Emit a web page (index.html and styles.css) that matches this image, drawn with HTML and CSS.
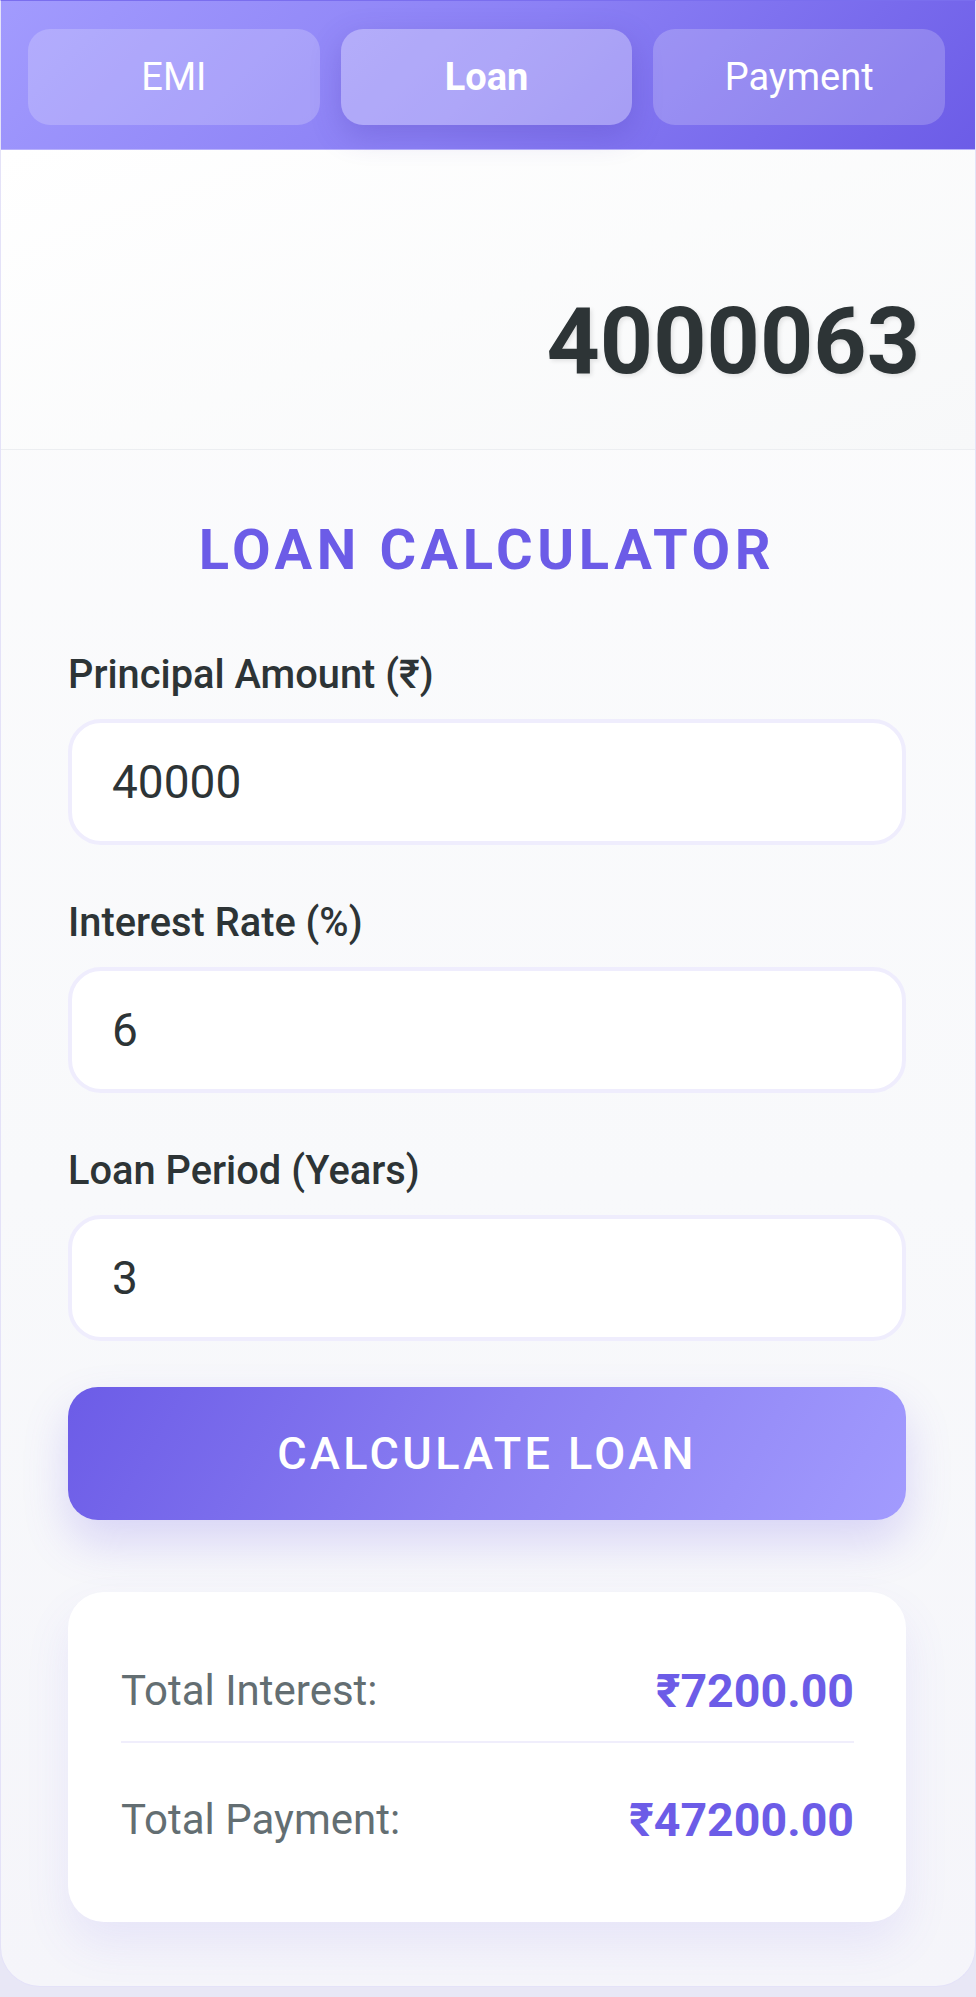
FILE: index.html
```html
<!DOCTYPE html>
<html lang="en">
<head>
<meta charset="utf-8">
<title>Loan Calculator</title>
<link rel="stylesheet" href="styles.css">
</head>
<body>
<div class="app">
  <nav class="tabs">
    <button class="tab">EMI</button>
    <button class="tab active">Loan</button>
    <button class="tab">Payment</button>
  </nav>
  <div class="display">
    <div class="display-value">4000063</div>
  </div>
  <main class="panel">
    <h1 class="title">LOAN CALCULATOR</h1>
    <div class="fields">
      <div class="field">
        <label class="label">Principal Amount (₹)</label>
        <div class="input">40000</div>
      </div>
      <div class="field">
        <label class="label">Interest Rate (%)</label>
        <div class="input">6</div>
      </div>
      <div class="field">
        <label class="label">Loan Period (Years)</label>
        <div class="input">3</div>
      </div>
    </div>
    <button class="calc">CALCULATE LOAN</button>
    <section class="result">
      <div class="row">
        <span class="row-label">Total Interest:</span>
        <span class="row-value">₹7200.00</span>
      </div>
      <div class="row">
        <span class="row-label">Total Payment:</span>
        <span class="row-value">₹47200.00</span>
      </div>
    </section>
  </main>
</div>
</body>
</html>
```
FILE: styles.css
```css
* { box-sizing: border-box; }
html, body { margin: 0; padding: 0; }
body {
  background: #e8e7f6;
  font-family: Roboto, "Liberation Sans", sans-serif;
  padding-bottom: 9px;
}
.app {
  border: 1px solid #e4e2f8;
  border-top: 1px solid #7a6eee;
  border-radius: 0 0 40px 40px;
  overflow: hidden;
  background: linear-gradient(180deg, #fcfcfd 0%, #f8f9fb 60%, #f5f5fa 100%);
}
.tabs {
  display: flex;
  gap: 21px;
  padding: 28px 30px 24px 27px;
  background: linear-gradient(135deg, #a29bfe 0%, #8b80f5 50%, #6c5ce7 100%);
  border-bottom: 1px solid #b8b1fc;
}
.tab {
  flex: 1;
  height: 96px;
  border: none;
  border-radius: 22px;
  background: rgba(255, 255, 255, 0.2);
  color: #ffffff;
  font-family: Roboto, "Liberation Sans", sans-serif;
  font-size: 38px;
  font-weight: 400;
  padding: 0;
}
.tab.active {
  background: rgba(255, 255, 255, 0.3);
  font-weight: 700;
  box-shadow: 0 10px 30px rgba(70, 50, 170, 0.25);
}
.display {
  height: 300px;
  display: flex;
  align-items: flex-end;
  justify-content: flex-end;
  padding: 0 55px 52px 0;
  background: linear-gradient(160deg, #ffffff 0%, #f7f8f9 100%);
  border-bottom: 1px solid #eceef1;
}
.display-value {
  font-size: 93px;
  font-weight: 700;
  line-height: 110px;
  color: #2d3436;
  text-shadow: 2px 2px 4px rgba(0, 0, 0, 0.1);
}
.panel {
  padding: 68px 69px 64px 67px;
}
.title {
  margin: 0 0 69px;
  text-align: center;
  font-size: 56px;
  line-height: 64px;
  font-weight: 700;
  letter-spacing: 4.6px;
  color: #6c5ce7;
}
.fields {
  display: flex;
  flex-direction: column;
  gap: 54px;
}
.field {
  display: flex;
  flex-direction: column;
}
.label {
  font-size: 39.8px;
  line-height: 47px;
  font-weight: 500;
  color: #2d3436;
  margin-bottom: 21px;
}
.input {
  height: 126px;
  border: 4.5px solid #efedfd;
  border-radius: 33px;
  background: #ffffff;
  padding: 0 40px;
  display: flex;
  align-items: center;
  font-size: 46px;
  color: #2d3436;
}
.calc {
  display: block;
  width: 100%;
  height: 133px;
  margin-top: 46px;
  border: none;
  border-radius: 30px;
  background: linear-gradient(120deg, #6c5ce7 0%, #8a7ef2 50%, #a29bfe 100%);
  color: #ffffff;
  font-family: Roboto, "Liberation Sans", sans-serif;
  font-size: 45px;
  font-weight: 500;
  letter-spacing: 3.4px;
  box-shadow: 0 22px 45px rgba(108, 92, 231, 0.22);
}
.result {
  margin-top: 72px;
  background: #ffffff;
  border-radius: 36px;
  padding: 49px 52px 52px 53px;
  box-shadow: 0 22px 45px rgba(108, 92, 231, 0.1);
}
.row {
  display: flex;
  justify-content: space-between;
  align-items: center;
  padding: 25px 0;
  line-height: 50px;
}
.row:first-child {
  border-bottom: 2px solid #f0eefc;
}
.row + .row {
  margin-top: 27px;
}
.row-label {
  font-size: 42px;
  color: #636e72;
}
.row-value {
  font-size: 46.5px;
  font-weight: 700;
  color: #6c5ce7;
}
```
